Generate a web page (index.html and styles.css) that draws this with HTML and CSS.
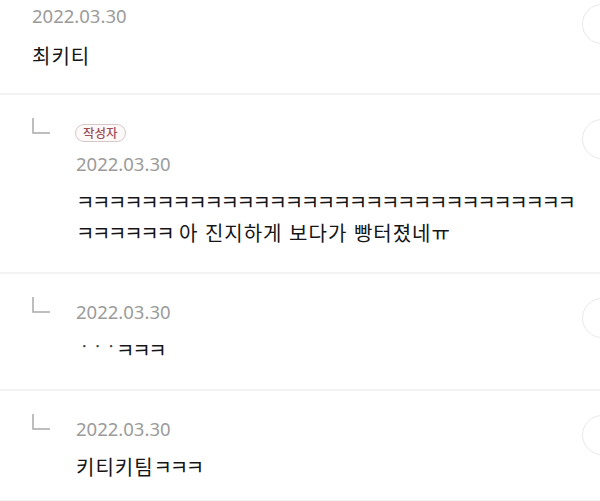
FILE: index.html
```html
<!DOCTYPE html>
<html lang="ko">
<head>
<meta charset="utf-8">
<title>댓글</title>
<link rel="stylesheet" href="styles.css">
</head>
<body>
<div class="list">
  <div class="comment top">
    <div class="body">
      <div class="date">2022.03.30</div>
      <div class="text">최키티</div>
    </div>
    <div class="action"></div>
  </div>

  <div class="comment reply">
    <div class="reply-icon">
      <svg width="18" height="16" viewBox="0 0 18 16"><path d="M1 0 V15 H18" fill="none" stroke="#a9a9a9" stroke-width="1.5"/></svg>
    </div>
    <div class="body">
      <div class="badge-row"><span class="badge">작성자</span></div>
      <div class="date">2022.03.30</div>
      <div class="text"><span class="jamo">ㅋㅋㅋㅋㅋㅋㅋㅋㅋㅋㅋㅋㅋㅋㅋㅋㅋㅋㅋㅋㅋㅋㅋㅋㅋㅋㅋㅋㅋㅋㅋㅋㅋㅋㅋㅋㅋ</span> 아 진지하게 보다가 빵터졌네ㅠ</div>
    </div>
    <div class="action"></div>
  </div>

  <div class="comment reply">
    <div class="reply-icon">
      <svg width="18" height="16" viewBox="0 0 18 16"><path d="M1 0 V15 H18" fill="none" stroke="#a9a9a9" stroke-width="1.5"/></svg>
    </div>
    <div class="body">
      <div class="date">2022.03.30</div>
      <div class="text"><span class="dots">ㆍㆍㆍ</span><span class="jamo">ㅋㅋㅋ</span></div>
    </div>
    <div class="action"></div>
  </div>

  <div class="comment reply">
    <div class="reply-icon">
      <svg width="18" height="16" viewBox="0 0 18 16"><path d="M1 0 V15 H18" fill="none" stroke="#a9a9a9" stroke-width="1.5"/></svg>
    </div>
    <div class="body">
      <div class="date">2022.03.30</div>
      <div class="text">키티키팀<span class="jamo">ㅋㅋㅋ</span></div>
    </div>
    <div class="action"></div>
  </div>
</div>
</body>
</html>
```

FILE: styles.css
```css
html, body {
  margin: 0;
  padding: 0;
  background: #ffffff;
}

body {
  width: 600px;
  height: 501px;
  overflow: hidden;
  font-family: "Noto Sans CJK KR", "Noto Sans", sans-serif;
  color: #161616;
}

.list {
  width: 600px;
  overflow: hidden;
}

.comment {
  display: flex;
  align-items: flex-start;
}

.comment.top {
  padding: 4px 0 22px 32px;
}

.comment.reply {
  border-top: 2px solid #f3f3f3;
  padding: 26px 0 24px 0;
}

.comment.reply:last-child {
  padding-bottom: 18px;
  border-bottom: 2px solid #f3f3f3;
}

.reply-icon {
  width: 76px;
  flex-shrink: 0;
  box-sizing: border-box;
  padding-left: 32px;
  margin-top: -3px;
  height: 16px;
}

.reply-icon svg {
  display: block;
}

.body {
  flex: 1;
  min-width: 0;
}

.date {
  font-family: "Noto Sans", sans-serif;
  font-size: 18.5px;
  line-height: 24px;
  color: #9b9b9b;
}

.top .text {
  margin-top: 12px;
}

.text {
  margin-top: 10px;
  font-size: 20px;
  letter-spacing: 1px;
  line-height: 31px;
  color: #161616;
  word-break: break-all;
}

.jamo {
  letter-spacing: -2.35px;
}

.dots {
  color: #444444;
  font-size: 17.8px;
  line-height: 0;
  letter-spacing: -3px;
  vertical-align: 5px;
}

.badge-row {
  height: 24px;
  margin-bottom: 7px;
  display: flex;
  align-items: center;
}

.badge {
  display: inline-flex;
  align-items: center;
  height: 18px;
  box-sizing: border-box;
  padding: 0 7px;
  margin-left: -1px;
  border: 1px solid #d9c8ca;
  border-radius: 9px;
  background: #fdf9f9;
  color: #9e4f5a;
  font-size: 12.5px;
  font-weight: 500;
  line-height: 1;
}

.action {
  width: 40px;
  height: 40px;
  flex-shrink: 0;
  box-sizing: border-box;
  border: 1.5px solid #e9e9e9;
  border-radius: 50%;
  margin-right: -22px;
}

.reply .action {
  margin-top: -2px;
}
```
